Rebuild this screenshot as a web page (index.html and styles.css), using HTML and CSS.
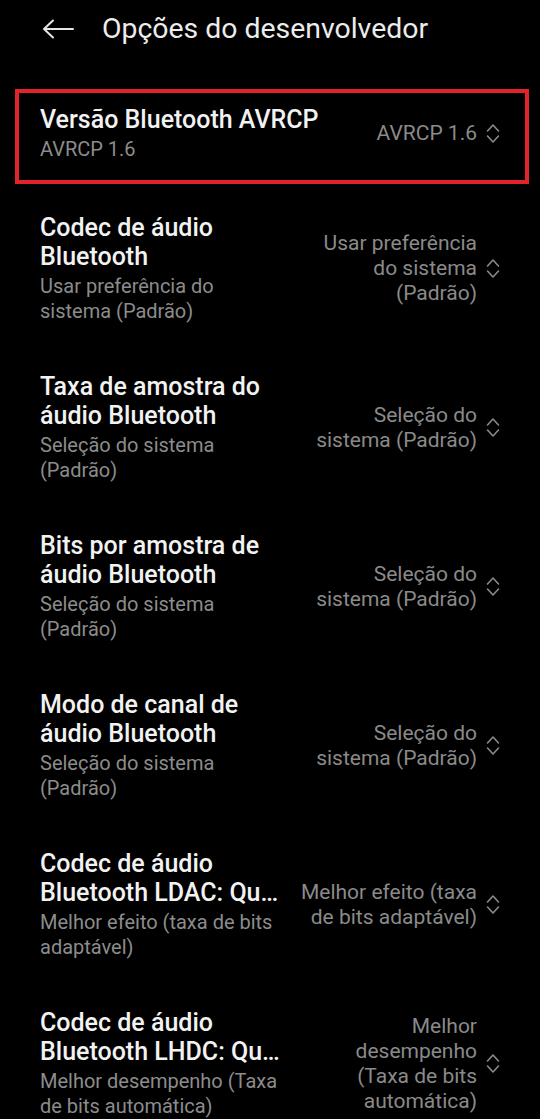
FILE: index.html
```html
<!DOCTYPE html>
<html lang="pt-BR">
<head>
    <meta charset="UTF-8">
    <title>Opções do desenvolvedor</title>
    <link rel="stylesheet" href="styles.css">
</head>
<body>
    <!-- cabeçalho -->
    <div class="header">
        <svg class="back" width="32" height="20" viewBox="0 0 32 20">
            <path d="M11 1.5 L2 10 L11 18.5 M2 10 H31" fill="none" stroke="#e6e6e6" stroke-width="2" stroke-linecap="round" stroke-linejoin="round"/>
        </svg>
        <h1>Opções do desenvolvedor</h1>
    </div>

    <!-- lista de opções -->
    <div class="list">
        <div class="row marked">
            <div class="left">
                <div class="title">Versão Bluetooth AVRCP</div>
                <div class="summary">AVRCP 1.6</div>
            </div>
            <div class="right">
                <div class="value short">AVRCP 1.6</div>
                <svg class="updown" width="14" height="21" viewBox="0 0 14 21"><path d="M1.5 8 L7 2 L12.5 8 M1.5 13 L7 19 L12.5 13" fill="none" stroke="#8a8a8a" stroke-width="1.6" stroke-linecap="round" stroke-linejoin="round"/></svg>
            </div>
        </div>

        <div class="row">
            <div class="left">
                <div class="title">Codec de áudio Bluetooth</div>
                <div class="summary">Usar preferência do sistema (Padrão)</div>
            </div>
            <div class="right">
                <div class="value">Usar preferência do sistema (Padrão)</div>
                <svg class="updown" width="14" height="21" viewBox="0 0 14 21"><path d="M1.5 8 L7 2 L12.5 8 M1.5 13 L7 19 L12.5 13" fill="none" stroke="#8a8a8a" stroke-width="1.6" stroke-linecap="round" stroke-linejoin="round"/></svg>
            </div>
        </div>

        <div class="row">
            <div class="left">
                <div class="title">Taxa de amostra do áudio Bluetooth</div>
                <div class="summary">Seleção do sistema (Padrão)</div>
            </div>
            <div class="right">
                <div class="value">Seleção do sistema (Padrão)</div>
                <svg class="updown" width="14" height="21" viewBox="0 0 14 21"><path d="M1.5 8 L7 2 L12.5 8 M1.5 13 L7 19 L12.5 13" fill="none" stroke="#8a8a8a" stroke-width="1.6" stroke-linecap="round" stroke-linejoin="round"/></svg>
            </div>
        </div>

        <div class="row">
            <div class="left">
                <div class="title">Bits por amostra de áudio Bluetooth</div>
                <div class="summary">Seleção do sistema (Padrão)</div>
            </div>
            <div class="right">
                <div class="value">Seleção do sistema (Padrão)</div>
                <svg class="updown" width="14" height="21" viewBox="0 0 14 21"><path d="M1.5 8 L7 2 L12.5 8 M1.5 13 L7 19 L12.5 13" fill="none" stroke="#8a8a8a" stroke-width="1.6" stroke-linecap="round" stroke-linejoin="round"/></svg>
            </div>
        </div>

        <div class="row">
            <div class="left">
                <div class="title">Modo de canal de áudio Bluetooth</div>
                <div class="summary">Seleção do sistema (Padrão)</div>
            </div>
            <div class="right">
                <div class="value">Seleção do sistema (Padrão)</div>
                <svg class="updown" width="14" height="21" viewBox="0 0 14 21"><path d="M1.5 8 L7 2 L12.5 8 M1.5 13 L7 19 L12.5 13" fill="none" stroke="#8a8a8a" stroke-width="1.6" stroke-linecap="round" stroke-linejoin="round"/></svg>
            </div>
        </div>

        <div class="row">
            <div class="left">
                <div class="title">
                    <span class="line">Codec de áudio</span>
                    <span class="line clip">Bluetooth LDAC: Qualidade de reprodução</span>
                </div>
                <div class="summary">Melhor efeito (taxa de bits adaptável)</div>
            </div>
            <div class="right">
                <div class="value">Melhor efeito (taxa de bits adaptável)</div>
                <svg class="updown" width="14" height="21" viewBox="0 0 14 21"><path d="M1.5 8 L7 2 L12.5 8 M1.5 13 L7 19 L12.5 13" fill="none" stroke="#8a8a8a" stroke-width="1.6" stroke-linecap="round" stroke-linejoin="round"/></svg>
            </div>
        </div>

        <div class="row">
            <div class="left">
                <div class="title">
                    <span class="line">Codec de áudio</span>
                    <span class="line clip">Bluetooth LHDC: Qualidade de reprodução</span>
                </div>
                <div class="summary">Melhor desempenho (Taxa de bits automática)</div>
            </div>
            <div class="right">
                <div class="value">Melhor desempenho (Taxa de bits automática)</div>
                <svg class="updown" width="14" height="21" viewBox="0 0 14 21"><path d="M1.5 8 L7 2 L12.5 8 M1.5 13 L7 19 L12.5 13" fill="none" stroke="#8a8a8a" stroke-width="1.6" stroke-linecap="round" stroke-linejoin="round"/></svg>
            </div>
        </div>
    </div>
</body>
</html>
```

FILE: styles.css
```css
html, body {
    background: #000;
}
body {
    margin: 0;
    height: 1119px;
    overflow: hidden;
    font-family: Roboto, "Noto Sans", sans-serif;
    color: #f2f2f2;
}
.header {
    height: 57px;
    display: flex;
    align-items: center;
    padding-left: 42px;
}
.header h1 {
    margin: 0 0 0 28px;
    font-size: 28.4px;
    font-weight: 400;
    color: #ececec;
}
.back {
    flex-shrink: 0;
}
.list {
    padding-top: 24px;
}
.row {
    display: flex;
    align-items: center;
    gap: 16px;
    padding: 24px 40px 24px 40px;
}
.left {
    flex: 1;
    min-width: 0;
}
.title {
    font-size: 25px;
    line-height: 29px;
    font-weight: 500;
}
.title .line {
    display: block;
}
.title .clip {
    white-space: nowrap;
    overflow: hidden;
    text-overflow: ellipsis;
}
.summary {
    margin-top: 3px;
    font-size: 20px;
    line-height: 25px;
    color: #8c8c8c;
}
.right {
    display: flex;
    align-items: center;
    gap: 9px;
    flex-shrink: 0;
}
.value {
    width: 178px;
    text-align: right;
    font-size: 21px;
    line-height: 25px;
    color: #8a8a8a;
}
.value.short {
    width: auto;
}
.updown {
    flex-shrink: 0;
}
/* moldura vermelha de destaque */
.marked {
    position: relative;
    margin-bottom: 3px;
}
.marked::after {
    content: "";
    position: absolute;
    top: 8px;
    bottom: 2px;
    left: 15px;
    right: 11px;
    border: 4px solid #e1232b;
}
```
